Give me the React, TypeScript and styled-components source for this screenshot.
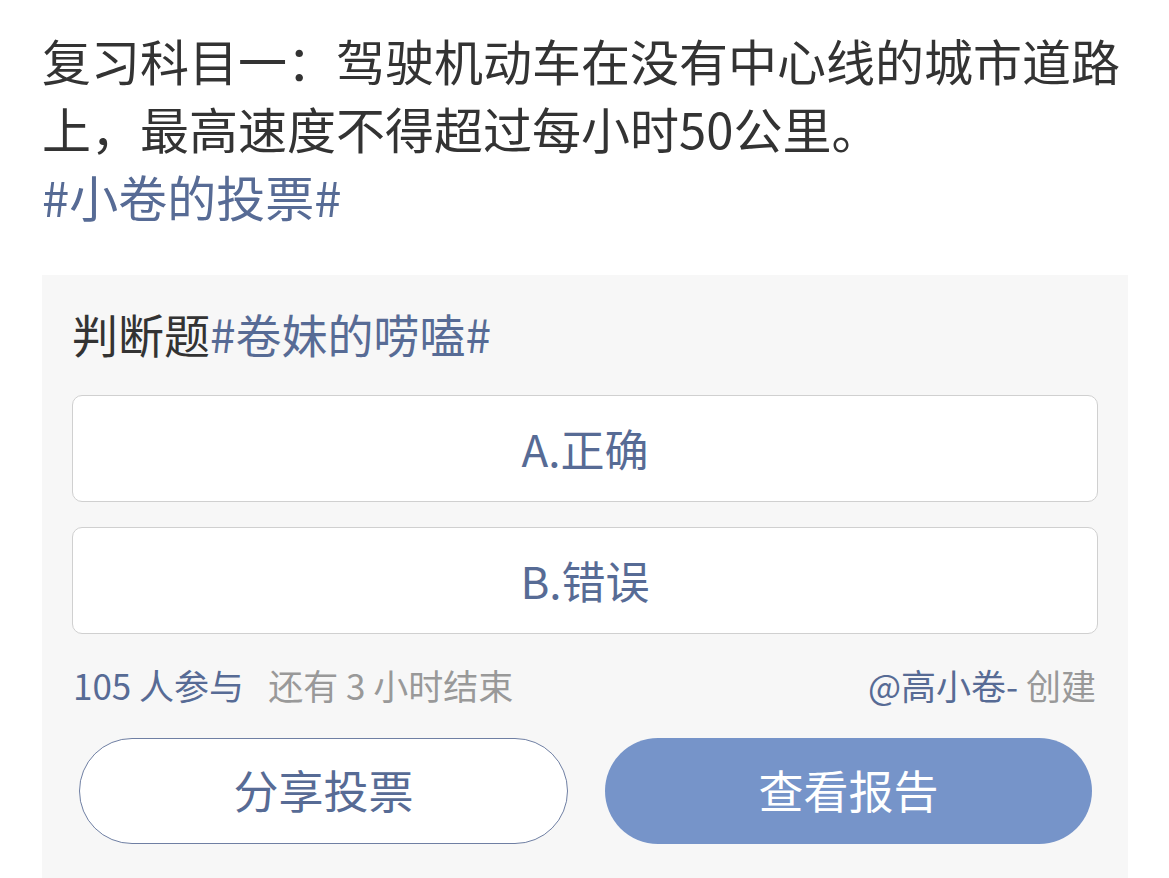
import React from 'react';
import styled, { createGlobalStyle } from 'styled-components';

const linkBlue = '#576b95';

const GlobalStyle = createGlobalStyle`
  html, body {
    margin: 0;
    padding: 0;
    background: #ffffff;
  }
  body {
    font-family: 'PingFang SC', 'Noto Sans CJK SC', 'Noto Sans', sans-serif;
    -webkit-font-smoothing: antialiased;
  }
`;

const Page = styled.div`
  padding: 26px 41px 0 42px;
`;

const Content = styled.p`
  margin: 0;
  font-size: 49px;
  line-height: 68px;
  color: #333333;
  word-spacing: 2px;
`;

const Topic = styled.span`
  color: ${linkBlue};
`;

const Card = styled.section`
  margin-top: 45px;
  background: #f7f7f7;
  padding: 30px 30px 34px;
`;

const CardTitle = styled.div`
  font-size: 46px;
  line-height: 56px;
  color: #333333;
`;

const Options = styled.div`
  margin-top: 34px;
  display: flex;
  flex-direction: column;
  gap: 25px;
`;

const Option = styled.button`
  display: flex;
  align-items: center;
  justify-content: center;
  height: 107px;
  box-sizing: border-box;
  background: #ffffff;
  border: 1px solid #d0d0d0;
  border-radius: 10px;
  font-family: inherit;
  font-weight: inherit;
  font-size: 44px;
  color: ${linkBlue};
  padding: 0 0 2px;
`;

const Meta = styled.div`
  margin-top: 31px;
  display: flex;
  align-items: center;
  justify-content: space-between;
  font-size: 35px;
  line-height: 40px;
  padding: 0 2px 0 1px;
`;

const MetaGroup = styled.div`
  display: flex;
  gap: 24px;
`;

const MetaText = styled.span<{ $blue?: boolean }>`
  color: ${p => (p.$blue ? linkBlue : '#999999')};
`;

const Actions = styled.div`
  margin-top: 33px;
  display: flex;
  gap: 37px;
  padding: 0 6px 0 7px;
`;

const ActionButton = styled.button<{ $primary?: boolean }>`
  flex: 1;
  height: 106px;
  box-sizing: border-box;
  border-radius: 53px;
  font-family: inherit;
  font-weight: inherit;
  font-size: 45px;
  padding: 0 0 4px;
  border: ${p => (p.$primary ? 'none' : '1.5px solid #6f7fa3')};
  background: ${p => (p.$primary ? '#7694c9' : '#ffffff')};
  color: ${p => (p.$primary ? '#ffffff' : linkBlue)};
`;

export default function App() {
  return (
    <>
      <GlobalStyle />
      <Page>
        <Content>
          复习科目一：驾驶机动车在没有中心线的城市道路上，最高速度不得超过每小时50公里。
          <br />
          <Topic>#小卷的投票#</Topic>
        </Content>
        <Card>
          <CardTitle>
            判断题<Topic>#卷妹的唠嗑#</Topic>
          </CardTitle>
          <Options>
            <Option>A.正确</Option>
            <Option>B.错误</Option>
          </Options>
          <Meta>
            <MetaGroup>
              <MetaText $blue>105 人参与</MetaText>
              <MetaText>还有 3 小时结束</MetaText>
            </MetaGroup>
            <span>
              <MetaText $blue>@高小卷-</MetaText>
              <MetaText> 创建</MetaText>
            </span>
          </Meta>
          <Actions>
            <ActionButton>分享投票</ActionButton>
            <ActionButton $primary>查看报告</ActionButton>
          </Actions>
        </Card>
      </Page>
    </>
  );
}
